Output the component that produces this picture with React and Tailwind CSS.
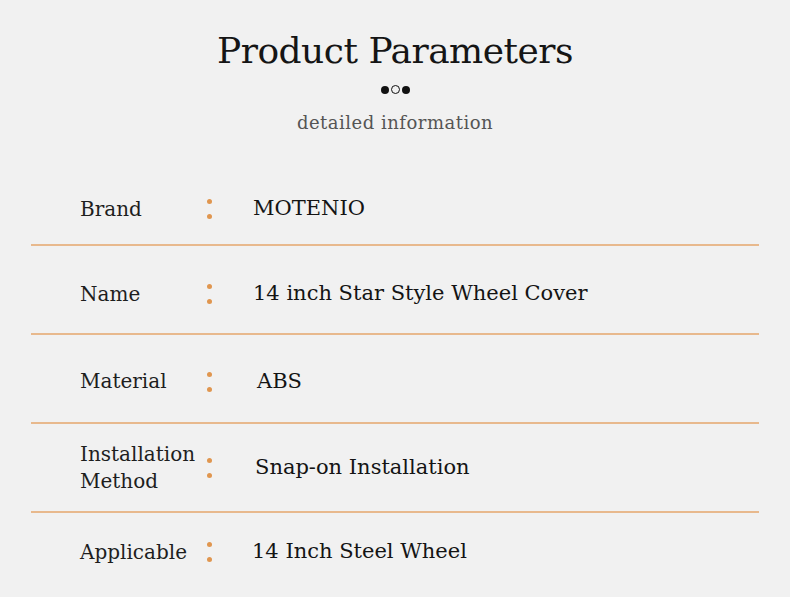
import React from 'react';

const rows = [
    { label: 'Brand', value: 'MOTENIO', pad: 'pt-[17px]', vpad: 'pl-[40px]' },
    { label: 'Name', value: '14 inch Star Style Wheel Cover', pad: 'pt-[9px]', vpad: 'pl-[40px]' },
    { label: 'Material', value: 'ABS', pad: 'pt-[6px]', vpad: 'pl-[44px]' },
    { label: ['Installation', 'Method'], value: 'Snap-on Installation', pad: 'pt-[0px]', vpad: 'pl-[42px]' },
    { label: 'Applicable', value: '14 Inch Steel Wheel', pad: 'pb-[11px]', vpad: 'pl-[39px]' },
];

const Colon = () => (
    <div className="flex flex-col gap-[10px] w-[6px]">
        <span className="w-[5px] h-[5px] rounded-full bg-[#e0964f]" />
        <span className="w-[5px] h-[5px] rounded-full bg-[#e0964f]" />
    </div>
);

const App = () => {
    return (
        <div className="w-[790px] h-[597px] overflow-hidden bg-[#f1f1f1] text-[#222] font-['DejaVu_Serif',serif]">
            <div className="flex flex-col items-center pt-[28px]">
                <h1 className="text-[36px] leading-[46px] text-[#151515] tracking-[-0.5px]">Product Parameters</h1>
                <div className="flex items-center gap-[2px] mt-[11px]">
                    <span className="w-[8px] h-[8px] rounded-full bg-[#111]" />
                    <span className="w-[9px] h-[9px] rounded-full border border-[#111]" />
                    <span className="w-[8px] h-[8px] rounded-full bg-[#111]" />
                </div>
                <p className="mt-[17px] text-[18px] leading-[24px] text-[#555] tracking-[0.5px]">detailed information</p>
            </div>

            <div className="mx-[31px] mt-[22px]">
                {rows.map((row, i) => (
                    <div
                        key={i}
                        className={`flex items-center h-[89px] ${row.pad} ${i < rows.length - 1 ? 'border-b-2 border-[#e8b98d]' : ''}`}
                    >
                        <div className="w-[176px] pl-[49px] text-[20px] leading-[27px] text-[#1e1e1e]">
                            {Array.isArray(row.label) ? row.label.map((l) => <div key={l}>{l}</div>) : row.label}
                        </div>
                        <Colon />
                        <div className={`${row.vpad} text-[21px] text-[#141414]`}>{row.value}</div>
                    </div>
                ))}
            </div>
        </div>
    );
};

export default App;
